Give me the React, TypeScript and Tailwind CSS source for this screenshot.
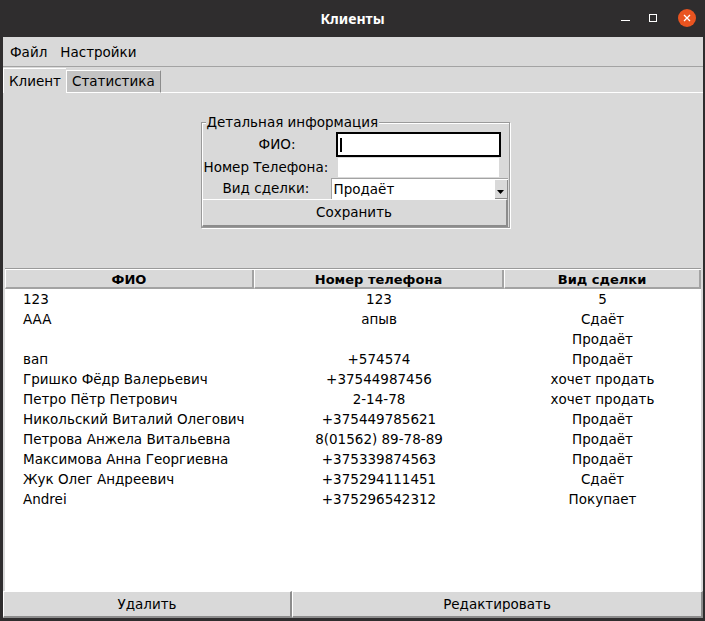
import React from "react";

const rows: [string, string, string][] = [
  ["123", "123", "5"],
  ["AAA", "апыв", "Сдаёт"],
  ["", "", "Продаёт"],
  ["вап", "+574574", "Продаёт"],
  ["Гришко Фёдр Валерьевич", "+37544987456", "хочет продать"],
  ["Петро Пётр Петрович", "2-14-78", "хочет продать"],
  ["Никольский Виталий Олегович", "+375449785621", "Продаёт"],
  ["Петрова Анжела Витальевна", "8(01562) 89-78-89", "Продаёт"],
  ["Максимова Анна Георгиевна", "+375339874563", "Продаёт"],
  ["Жук Олег Андреевич", "+375294111451", "Сдаёт"],
  ["Andrei", "+375296542312", "Покупает"],
];

const font = { fontFamily: "'DejaVu Sans', sans-serif" };
const raised = "border-t border-l border-white border-r-2 border-b-2 border-r-[#8c8c8c] border-b-[#8c8c8c]";

export default function App() {
  return (
    <div className="w-[705px] h-[621px] bg-[#2f2d2e] flex flex-col overflow-hidden" style={font}>
      <div className="h-[37px] relative flex items-center justify-center shrink-0">
        <span className="text-white font-bold text-[14px]" style={{ fontFamily: "'Noto Sans', sans-serif" }}>Клиенты</span>
        <div className="absolute right-[9px] top-[9px] flex items-center gap-[16px]">
          <div className="w-[9px] h-px bg-white mt-[4px]" />
          <div className="w-[8px] h-[8px] border border-white ml-[3px]" />
          <div className="w-[18px] h-[18px] rounded-full bg-[#e95420] flex items-center justify-center ml-[5px]">
            <svg width="8" height="8" viewBox="0 0 8 8">
              <path d="M1 1L7 7M7 1L1 7" stroke="white" strokeWidth="1.3" />
            </svg>
          </div>
        </div>
      </div>
      <div className="flex-1 ml-[3px] mr-[2px] mb-[3px] bg-[#d9d9d9] flex flex-col text-[13.5px] text-black">
        <div className="h-[30px] flex items-center gap-[13px] px-[7px] pt-px border-b border-[#a3a3a3] shrink-0">
          <span>Файл</span>
          <span>Настройки</span>
        </div>
        <div className="flex items-end h-[25px] mt-px shrink-0">
          <div className="h-[25px] px-[5px] flex items-center border-t border-l border-white bg-[#d9d9d9]">Клиент</div>
          <div className="h-[23px] px-[5px] flex items-center bg-[#c3c3c3] border-t border-l border-white border-r border-r-[#8c8c8c] border-b border-b-white">Статистика</div>
          <div className="flex-1 border-b border-white" />
        </div>
        <div className="h-[175px] flex justify-center items-start pt-[29px] shrink-0">
          <div className="w-[309px] ml-[4px] relative border border-[#9a9a9a] shadow-[inset_1px_1px_0_#fff,1px_1px_0_#fff] pt-[9px]">
            <span className="absolute -top-[10px] left-[4px] bg-[#d9d9d9] px-px leading-[18px]">Детальная информация</span>
            <div className="flex items-center h-[25px]">
              <span className="w-[134px] text-center pl-[17px]">ФИО:</span>
              <div className="w-[165px] h-[25px] bg-white border-2 border-black flex items-center pl-[2px]">
                <div className="w-[2px] h-[14px] bg-black" />
              </div>
            </div>
            <div className="flex items-center h-[21px]">
              <span className="w-[135px] pl-[2px] whitespace-nowrap">Номер Телефона:</span>
              <div className="w-[163px] h-[21px] bg-white border border-[#d9d9d9]" />
            </div>
            <div className="flex items-center h-[21px]">
              <span className="w-[129px] text-center whitespace-nowrap">Вид сделки:</span>
              <div className="w-[177px] h-[21px] bg-white border-t border-l border-[#a3a3a3] flex items-center relative pl-[2px]">
                <span>Продаёт</span>
                <div className="absolute right-0 top-[1px] w-[13px] h-[19px] bg-[#d9d9d9] border-r border-b border-[#8c8c8c] flex items-end justify-center pb-[4px]">
                  <svg width="7" height="4" viewBox="0 0 7 4"><path d="M0 0H7L3.5 4Z" fill="black" /></svg>
                </div>
              </div>
            </div>
            <div className={`h-[28px] mr-px flex items-center justify-center ${raised}`}>Сохранить</div>
          </div>
        </div>
        <div className="flex-1 mx-[2px] border-t border-[#9a9a9a] flex flex-col bg-white">
          <div className="flex h-[20px] bg-[#d9d9d9] font-bold text-[13px] border-t border-white shrink-0">
            <div className="w-[249px] text-center border-r-2 border-b-2 border-[#a3a3a3] border-l border-l-white">ФИО</div>
            <div className="w-[250px] text-center border-r-2 border-b-2 border-[#a3a3a3] border-l border-l-white">Номер телефона</div>
            <div className="flex-1 text-center border-r-2 border-b-2 border-[#a3a3a3] border-l border-l-white">Вид сделки</div>
          </div>
          <div className="flex-1">
            {rows.map((r, i) => (
              <div key={i} className="flex h-[20px] items-center">
                <div className="w-[249px] pl-[18px]">{r[0]}</div>
                <div className="w-[250px] text-center">{r[1]}</div>
                <div className="flex-1 text-center">{r[2]}</div>
              </div>
            ))}
          </div>
        </div>
        <div className="flex h-[27px] shrink-0">
          <div className={`w-[289px] flex items-center justify-center ${raised}`}>Удалить</div>
          <div className={`flex-1 flex items-center justify-center ${raised}`}>Редактировать</div>
        </div>
      </div>
    </div>
  );
}
